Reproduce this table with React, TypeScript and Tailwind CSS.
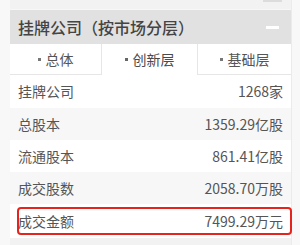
import React from "react";

const rows = [
  { label: "挂牌公司", value: "1268家", bg: "bg-white", h: "h-[33px]" },
  { label: "总股本", value: "1359.29亿股", bg: "bg-[#f7f7f7]", h: "h-[32px]" },
  { label: "流通股本", value: "861.41亿股", bg: "bg-white", h: "h-[32px]" },
  { label: "成交股数", value: "2058.70万股", bg: "bg-[#f7f7f7]", h: "h-[32px]" },
];

export default function App() {
  return (
    <div
      className="w-[300px] h-[245px] bg-[#f8f8f8] flex overflow-hidden"
      style={{ fontFamily: '"Noto Sans CJK SC", "Noto Sans", sans-serif' }}
    >
      <div className="ml-[10px] w-[282px] bg-[#f2f2f2] border-r border-[#ebebeb] flex flex-col">
        <div className="h-[9px] relative">
          <div className="absolute left-[253px] top-0 w-[19px] h-[2px] bg-[#dcdcdc]" />
        </div>
        <div className="h-px bg-[#f7f7f7]" />
        <div className="h-[34px] bg-[#e1e1e1] flex items-center justify-between pl-2 pr-3">
          <span className="text-[16px] font-medium text-[#444]">挂牌公司（按市场分层）</span>
          <span className="block w-[13px] h-[3px] bg-white" />
        </div>
        <div className="h-[31px] flex bg-white text-[14px] text-[#555]">
          <div className="w-[92px] border-r border-b border-[#e6e6e6] flex items-center justify-center gap-[5px]">
            <span className="block w-[3px] h-[3px] bg-[#777]" />
            <span>总体</span>
          </div>
          <div className="w-[95px] flex items-center justify-center gap-[5px] text-[#4a4a4a]">
            <span className="block w-[3px] h-[3px] bg-[#666]" />
            <span>创新层</span>
          </div>
          <div className="flex-1 border-l border-b border-[#e6e6e6] flex items-center justify-center gap-[5px]">
            <span className="block w-[3px] h-[3px] bg-[#777]" />
            <span>基础层</span>
          </div>
        </div>
        {rows.map((r) => (
          <div
            key={r.label}
            className={`${r.bg} ${r.h} flex items-center justify-between pl-2 pr-2 text-[14px] text-[#555]`}
          >
            <span>{r.label}</span>
            <span>{r.value}</span>
          </div>
        ))}
        <div className="relative h-[34px] bg-white flex items-center justify-between pl-2 pr-2 text-[14px] text-[#555]">
          <span>成交金额</span>
          <span>7499.29万元</span>
          <div className="absolute left-[7px] right-[-1px] top-[3px] h-[28px] border-2 border-[#e5241d] rounded-[4px]" />
        </div>
        <div className="flex-1 bg-[#f2f2f2]" />
      </div>
    </div>
  );
}
